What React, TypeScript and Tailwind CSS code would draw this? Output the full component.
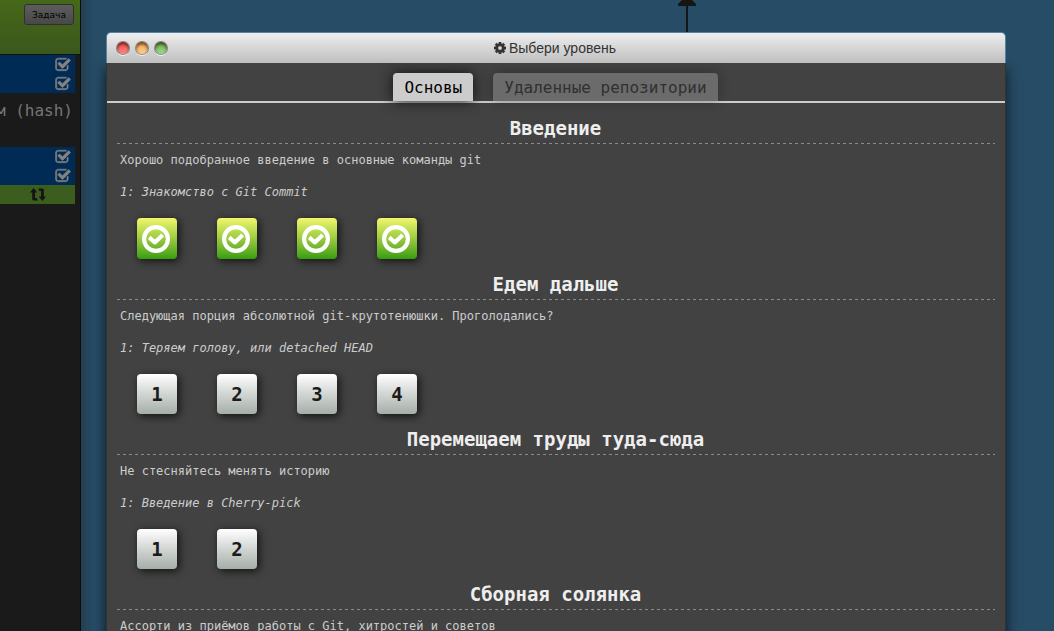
import React, { useState } from "react";

const CHECK_SQUARE =
  "M1472 930v318q0 119-84.5 203.5t-203.5 84.5h-832q-119 0-203.5-84.5t-84.5-203.5v-832q0-119 84.5-203.5t203.5-84.5h832q63 0 117 25 15 7 18 23 3 17-9 29l-49 49q-10 10-23 10-3 0-9-2-23-6-45-6h-832q-66 0-113 47t-47 113v832q0 66 47 113t113 47h832q66 0 113-47t47-113v-254q0-13 9-22l64-64q10-10 23-10 6 0 12 3 20 8 20 29zm231-489l-814 814q-24 24-57 24t-57-24l-430-430q-24-24-24-57t24-57l110-110q24-24 57-24t57 24l263 263 647-647q24-24 57-24t57 24l110 110q24 24 24 57t-24 57z";

const COG =
  "M1152 896q0-106-75-181t-181-75-181 75-75 181 75 181 181 75 181-75 75-181zm512-109v222q0 12-8 23t-20 13l-185 28q-19 54-39 91 35 50 107 138 10 12 10 25t-9 23q-27 37-99 108t-94 71q-12 0-26-9l-138-108q-44 23-91 38-16 136-29 186-7 28-36 28h-222q-14 0-24.5-8.5t-11.5-21.5l-28-184q-49-16-90-37l-141 107q-10 9-25 9-14 0-25-11-126-114-165-168-7-10-7-23 0-12 8-23 15-21 51-66.5t54-70.5q-27-50-41-99l-183-27q-13-2-21-12.5t-8-23.5v-222q0-12 8-23t19-13l186-28q14-46 39-92-40-57-107-138-10-12-10-24 0-10 9-23 26-36 98.5-107.5t94.5-71.5q13 0 26 10l138 107q44-23 91-38 16-136 29-186 7-28 36-28h222q14 0 24.5 8.5t11.5 21.5l28 184q49 16 90 37l142-107q9-9 24-9 13 0 25 10 129 119 165 170 7 8 7 22 0 12-8 23-15 21-51 66.5t-54 70.5q26 50 41 98l183 28q13 2 21 12.5t8 23.5z";

type Sequence = {
  title: string;
  about: string;
  level?: string;
  count: number;
  solved: boolean;
};

const SEQUENCES: Sequence[] = [
  {
    title: "Введение",
    about: "Хорошо подобранное введение в основные команды git",
    level: "1: Знакомство с Git Commit",
    count: 4,
    solved: true,
  },
  {
    title: "Едем дальше",
    about: "Следующая порция абсолютной git-крутотенюшки. Проголодались?",
    level: "1: Теряем голову, или detached HEAD",
    count: 4,
    solved: false,
  },
  {
    title: "Перемещаем труды туда-сюда",
    about: "Не стесняйтесь менять историю",
    level: "1: Введение в Cherry-pick",
    count: 2,
    solved: false,
  },
  {
    title: "Сборная солянка",
    about: "Ассорти из приёмов работы с Git, хитростей и советов",
    count: 0,
    solved: false,
  },
];

const TABS = ["Основы", "Удаленные репозитории"];

function CommandRow() {
  return (
    <div className="flex h-[19px] items-center justify-end bg-[#002b55] pr-1">
      <svg viewBox="0 0 1792 1792" className="size-4 fill-[#838383] stroke-[#838383]" aria-hidden="true">
        <path d={CHECK_SQUARE} strokeWidth="60" />
      </svg>
    </div>
  );
}

function Sidebar() {
  return (
    <aside className="flex w-[81px] shrink-0 flex-col overflow-hidden border-r border-[#0c0c0c] bg-[#1a1a1a]">
      <div className="flex h-[55px] shrink-0 items-start justify-end border-b border-[#111] bg-linear-to-b from-[#466819] to-[#3a581c] px-1.5 pt-1">
        <button
          type="button"
          className="h-[21px] w-[50px] rounded-[3px] border border-[#303030] bg-linear-to-b from-[#5d5d5d] to-[#484848] pt-0.5 font-['DejaVu_Sans',sans-serif] text-[9px] leading-none text-black"
        >
          Задача
        </button>
      </div>
      <div className="mr-[5px]">
        <CommandRow />
        <CommandRow />
        <p className="flex h-[54px] justify-end pt-1.5 pr-0.5 text-base leading-6 whitespace-nowrap text-[#757575]">
          м (hash)
        </p>
        <CommandRow />
        <CommandRow />
        <div className="flex h-[19px] items-center justify-center bg-[#3b5d1d]">
          <svg viewBox="0 0 16 13" className="h-[13px] w-4 fill-[#141414]" aria-hidden="true">
            <path d="M3.6 0 7.2 4.4H5V10H6.6L7.8 12.4H3.6Q2.2 12.4 2.2 11V4.4H0Z" />
            <path d="M12.4 13 8.8 8.6H11V3H9.4L8.2 .6H12.4Q13.8 .6 13.8 2V8.6H16Z" />
          </svg>
        </div>
      </div>
    </aside>
  );
}

function LevelButton({ number, solved }: { number: number; solved: boolean }) {
  if (solved) {
    return (
      <button
        type="button"
        aria-label={`Уровень ${number}`}
        className="flex h-[41px] w-10 items-center justify-center rounded bg-linear-to-b from-[#f1f76b] to-[#349e0b] pr-0.5 shadow-[2px_2px_8px_rgba(0,0,0,0.75)]"
      >
        <svg viewBox="0 0 28 28" className="size-7 fill-none stroke-white" aria-hidden="true">
          <circle cx="14" cy="14" r="11.9" strokeWidth="4.2" />
          <path d="M8.8 13.8 12.8 17.4 19.2 11.4" strokeWidth="4.2" strokeLinejoin="round" strokeLinecap="square" />
        </svg>
      </button>
    );
  }
  return (
    <button
      type="button"
      className="size-10 rounded bg-linear-to-b from-white to-[#a6aea8] text-[19px] font-bold text-[#1b1b1b] shadow-[2px_2px_8px_rgba(0,0,0,0.75)]"
    >
      {number}
    </button>
  );
}

function SequenceSection({ title, about, level, count, solved }: Sequence) {
  return (
    <section className="pb-[11px]">
      <h2 className="pr-px pb-px text-center text-[19px] leading-7 font-bold text-[#eee]">{title}</h2>
      <div className="h-px bg-[repeating-linear-gradient(90deg,#8a8a8a_0_3px,transparent_3px_6px)]" />
      <p className="px-[3px] pt-[7px] text-xs leading-[18px] text-[#ccc]">{about}</p>
      {level && <p className="px-[3px] pt-3.5 text-xs leading-[18px] text-[#ccc] italic">{level}</p>}
      {count > 0 && (
        <div className="flex gap-10 px-5 pt-[17px]">
          {Array.from({ length: count }, (_, i) => (
            <LevelButton key={i} number={i + 1} solved={solved} />
          ))}
        </div>
      )}
    </section>
  );
}

const LIGHT =
  "size-3 rounded-full shadow-[inset_0_2px_3px_rgba(60,20,10,0.75),0_0_0_1px_rgba(110,110,110,0.8),0_2px_0_rgba(255,255,255,0.8)]";

function LevelWindow() {
  const [active, setActive] = useState(0);
  return (
    <div className="flex min-w-0 flex-1 flex-col">
      <header className="z-10 grid h-[31px] shrink-0 grid-cols-[1fr_auto_1fr] items-center rounded-t-[5px] border border-b-0 border-[#5384a8] bg-linear-to-b from-[#eee] to-[#bfbfbf] px-2.5">
        <div className="flex gap-[7px]">
          <button type="button" aria-label="Закрыть" className={`${LIGHT} bg-linear-to-b from-[#ef4b4b] to-[#ff8585]`} />
          <button type="button" aria-label="Свернуть" className={`${LIGHT} bg-linear-to-b from-[#eda54d] to-[#ffd08a]`} />
          <button type="button" aria-label="Развернуть" className={`${LIGHT} bg-linear-to-b from-[#62ad50] to-[#9fdc8c]`} />
        </div>
        <h1 className="flex items-center gap-[3px] pr-0.5 font-['Liberation_Sans',Arial,sans-serif] text-sm text-[#333]">
          <svg viewBox="128 128 1536 1536" className="size-3 fill-[#333] stroke-[#333]" aria-hidden="true">
            <path d={COG} strokeWidth="40" />
          </svg>
          Выбери уровень
        </h1>
      </header>
      <div className="flex-1 border-x border-[#333] bg-[#424242] shadow-[0_6px_12px_rgba(0,0,0,0.7)]">
        <div role="tablist" className="flex justify-center gap-5 border-b-2 border-[#ccc] pt-2.5 pr-px">
          {TABS.map((tab, i) => (
            <button
              key={tab}
              type="button"
              role="tab"
              aria-selected={i === active}
              onClick={() => setActive(i)}
              className={
                i === active
                  ? "h-7 rounded-t bg-[#ccc] px-[11px] pt-0.5 text-base text-black shadow-[0_0_14px_#111]"
                  : "h-7 rounded-t bg-[#6b6b6b] px-[11px] pt-0.5 text-base text-[#303030] shadow-[0_0_12px_rgba(0,0,0,0.3)]"
              }
            >
              {tab}
            </button>
          ))}
        </div>
        <div className="px-2.5 pt-[11px]">
          {SEQUENCES.map((sequence) => (
            <SequenceSection key={sequence.title} {...sequence} />
          ))}
        </div>
      </div>
    </div>
  );
}

export default function App() {
  return (
    <div className="flex h-screen overflow-hidden bg-[#274c66] font-['DejaVu_Sans_Mono',Menlo,monospace]">
      <Sidebar />
      <main className="flex min-w-0 flex-1 flex-col bg-[linear-gradient(90deg,#223f50_0,#274c66_12px)] pr-12 pl-[25px]">
        <div className="flex h-8 shrink-0 justify-center pl-[261px]">
          <svg viewBox="0 0 18 32" className="h-8 w-[18px] fill-[#151515]" aria-hidden="true">
            <path d="M4 0H14L18 4V6H10V32H8V6H0V4Z" />
          </svg>
        </div>
        <LevelWindow />
      </main>
    </div>
  );
}
